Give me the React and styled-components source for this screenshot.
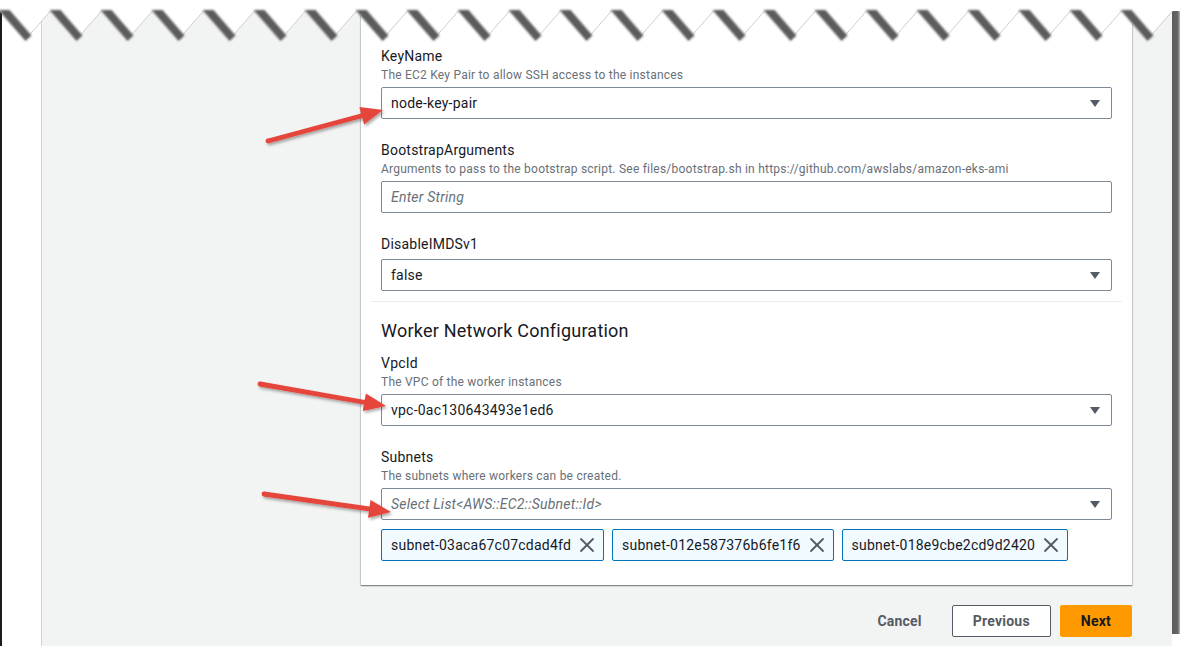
import React from "react";
import styled, { createGlobalStyle } from "styled-components";
import { X } from "lucide-react";

const GlobalStyle = createGlobalStyle`
  html, body { margin: 0; padding: 0; background: #ffffff; }
  body {
    font-family: Roboto, "Liberation Sans", Arial, sans-serif;
    letter-spacing: 0.014em;
    color: #16191f;
  }
  * { box-sizing: border-box; }
`;

const fields = [
  { label: "KeyName", desc: "The EC2 Key Pair to allow SSH access to the instances", value: "node-key-pair", select: true },
  {
    label: "BootstrapArguments",
    desc: "Arguments to pass to the bootstrap script. See files/bootstrap.sh in https://github.com/awslabs/amazon-eks-ami",
    placeholder: "Enter String",
  },
  { label: "DisableIMDSv1", value: "false", select: true },
];

const networkFields = [
  { label: "VpcId", desc: "The VPC of the worker instances", value: "vpc-0ac130643493e1ed6", select: true },
  { label: "Subnets", desc: "The subnets where workers can be created.", placeholder: "Select List<AWS::EC2::Subnet::Id>", select: true },
];

const subnets = ["subnet-03aca67c07cdad4fd", "subnet-012e587376b6fe1f6", "subnet-018e9cbe2cd9d2420"];

// red annotation arrows: tail -> tip
const arrows = [
  { from: [268, 141], to: [383, 110] },
  { from: [260, 384], to: [386, 406] },
  { from: [264, 494], to: [391, 512] },
];

export default function App() {
  return (
    <>
      <GlobalStyle />
      <Frame>
        <LeftRule />
        <Paper>
          <Card>
            {fields.map((f) => (
              <Field key={f.label} {...f} />
            ))}
            <Divider />
            <Heading>Worker Network Configuration</Heading>
            <NetworkGroup>
              {networkFields.map((f) => (
                <Field key={f.label} {...f} />
              ))}
            </NetworkGroup>
            <TokenList>
              {subnets.map((s) => (
                <Token key={s}>
                  {s}
                  <X size={24} strokeWidth={1.8} color="#545b64" />
                </Token>
              ))}
            </TokenList>
          </Card>
          <Actions>
            <LinkButton>Cancel</LinkButton>
            <Button>Previous</Button>
            <Button $primary>Next</Button>
          </Actions>
        </Paper>
        <EdgeShadow />
        <TornEdge />
        <Arrows />
      </Frame>
    </>
  );
}

function Field({ label, desc, value, placeholder, select }) {
  return (
    <FieldWrap>
      <Label>{label}</Label>
      {desc && <Desc>{desc}</Desc>}
      <Control>
        {value ? <Value>{value}</Value> : <Placeholder>{placeholder}</Placeholder>}
        {select && (
          <svg width="10" height="7" viewBox="0 0 10 7">
            <polygon points="0,0 10,0 5,7" fill="#545b64" />
          </svg>
        )}
      </Control>
    </FieldWrap>
  );
}

function TornEdge() {
  const P = 51;
  const top = 11;
  const bottom = 40;
  const peaks = Array.from({ length: 24 }, (_, k) => -0.5 + P * k);
  let d = `M-2,0 L1187,0 L1187,${top} `;
  for (let k = 23; k >= 0; k--) {
    d += `L${peaks[k]},${top} `;
    if (k > 0) d += `L${peaks[k - 1] + P / 2},${bottom} `;
  }
  d += `L-2,${top} Z`;

  return (
    <EdgeSvg width="1187" height="50" viewBox="0 0 1187 50">
      <defs>
        <filter id="soft" x="-20%" y="-20%" width="140%" height="140%">
          <feGaussianBlur stdDeviation="0.8" />
        </filter>
      </defs>
      <path d={d} fill="#ffffff" />
      {peaks.slice(0, 23).map((px) => (
        <line key={"a" + px} x1={px + P / 2} y1={bottom} x2={px + P} y2={top} stroke="#cfcfcf" strokeWidth="1" />
      ))}
      <g filter="url(#soft)">
        {peaks.slice(0, 23).map((px) => (
          <polygon
            key={"s" + px}
            points={`${px - 1},${top - 1} ${px + 10},${top - 1} ${px + 32},${35.5} ${px + 26},${bottom + 1}`}
            fill="#5b5b5b"
          />
        ))}
      </g>
    </EdgeSvg>
  );
}

function arrowPoints([tx, ty], [px, py]) {
  const len = Math.hypot(px - tx, py - ty);
  const dx = (px - tx) / len;
  const dy = (py - ty) / len;
  const nx = -dy;
  const ny = dx;
  const L = 22;
  const W = 9;
  const s = 2.4;
  const bx = px - dx * L;
  const by = py - dy * L;
  const pts = [
    [tx + nx * s, ty + ny * s],
    [bx + nx * s, by + ny * s],
    [bx + nx * W, by + ny * W],
    [px, py],
    [bx - nx * W, by - ny * W],
    [bx - nx * s, by - ny * s],
    [tx - nx * s, ty - ny * s],
  ];
  return pts.map((p) => p.map((v) => v.toFixed(1)).join(",")).join(" ");
}

function Arrows() {
  return (
    <ArrowSvg width="1187" height="646" viewBox="0 0 1187 646">
      <defs>
        <filter id="arrowShadow" x="-10%" y="-50%" width="120%" height="200%">
          <feDropShadow dx="1.5" dy="2" stdDeviation="1.4" floodColor="#000" floodOpacity="0.35" />
        </filter>
      </defs>
      {arrows.map((a, i) => (
        <g key={i} filter="url(#arrowShadow)">
          <polygon points={arrowPoints(a.from, a.to)} fill="#e6443a" />
          <circle cx={a.from[0]} cy={a.from[1]} r="2.4" fill="#e6443a" />
        </g>
      ))}
    </ArrowSvg>
  );
}

const Frame = styled.div`
  position: relative;
  width: 1187px;
  height: 646px;
  overflow: hidden;
  background: #ffffff;
  display: flex;
  align-items: flex-start;
`;

const LeftRule = styled.div`
  width: 2px;
  height: 100%;
  background: #1b1b1b;
  margin-right: 39px;
`;

const Paper = styled.div`
  width: 1131px;
  height: 100%;
  background: #f2f3f3;
  border-left: 1px solid #cfd3d3;
  padding: 0 40px 0 319px;
  display: flex;
  flex-direction: column;
`;

const EdgeShadow = styled.div`
  width: 8px;
  height: 634px;
  background: linear-gradient(to right, #5c5c5c 0, #666666 70%, #b5b5b5 100%);
`;

const Card = styled.div`
  background: #ffffff;
  padding: 45px 20px 24px;
  box-shadow: 0 1px 1px 0 rgba(0, 28, 36, 0.3), 1px 1px 1px 0 rgba(0, 28, 36, 0.15),
    -1px 1px 1px 0 rgba(0, 28, 36, 0.15);
  display: flex;
  flex-direction: column;
`;

const FieldWrap = styled.div`
  display: flex;
  flex-direction: column;
  & + & {
    margin-top: 20px;
  }
`;

const Label = styled.div`
  font-size: 14px;
  line-height: 22px;
  color: #16191f;
`;

const Desc = styled.div`
  font-size: 12px;
  line-height: 16px;
  color: #687078;
`;

const Control = styled.div`
  margin-top: 4px;
  height: 32px;
  border: 1px solid #7d8998;
  border-radius: 2px;
  background: #ffffff;
  display: flex;
  align-items: center;
  justify-content: space-between;
  padding: 0 11px 0 9px;
  font-size: 14px;
`;

const Value = styled.span`
  color: #16191f;
`;

const Placeholder = styled.span`
  color: #687078;
  font-style: italic;
`;

const Divider = styled.div`
  height: 1px;
  background: #eaeded;
  margin: 10px -10px 0;
`;

const Heading = styled.h2`
  margin: 16px 0 0;
  font-size: 18px;
  line-height: 26px;
  font-weight: 400;
  color: #16191f;
`;

const NetworkGroup = styled.div`
  margin-top: 8px;
  display: flex;
  flex-direction: column;
`;

const TokenList = styled.div`
  margin-top: 9px;
  display: flex;
  gap: 8px;
`;

const Token = styled.div`
  height: 32px;
  display: flex;
  align-items: center;
  gap: 4px;
  padding: 0 4px 0 9px;
  border: 1px solid #0073bb;
  border-radius: 2px;
  background: #f1faff;
  font-size: 14px;
  color: #16191f;
`;

const Actions = styled.div`
  margin-top: 20px;
  display: flex;
  justify-content: flex-end;
  gap: 9px;
`;

const LinkButton = styled.button`
  height: 32px;
  padding: 0 21px;
  background: none;
  border: none;
  font-family: inherit;
  letter-spacing: inherit;
  font-size: 14px;
  font-weight: 700;
  color: #545b64;
`;

const Button = styled.button`
  height: 32px;
  padding: 0 20px;
  border-radius: 2px;
  font-family: inherit;
  letter-spacing: inherit;
  font-size: 14px;
  font-weight: 700;
  border: 1px solid ${(p) => (p.$primary ? "#ff9900" : "#545b64")};
  background: ${(p) => (p.$primary ? "#ff9900" : "#ffffff")};
  color: ${(p) => (p.$primary ? "#16191f" : "#545b64")};
`;

const EdgeSvg = styled.svg`
  position: absolute;
  top: 0;
  left: 0;
  pointer-events: none;
`;

const ArrowSvg = styled.svg`
  position: absolute;
  top: 0;
  left: 0;
  pointer-events: none;
`;
